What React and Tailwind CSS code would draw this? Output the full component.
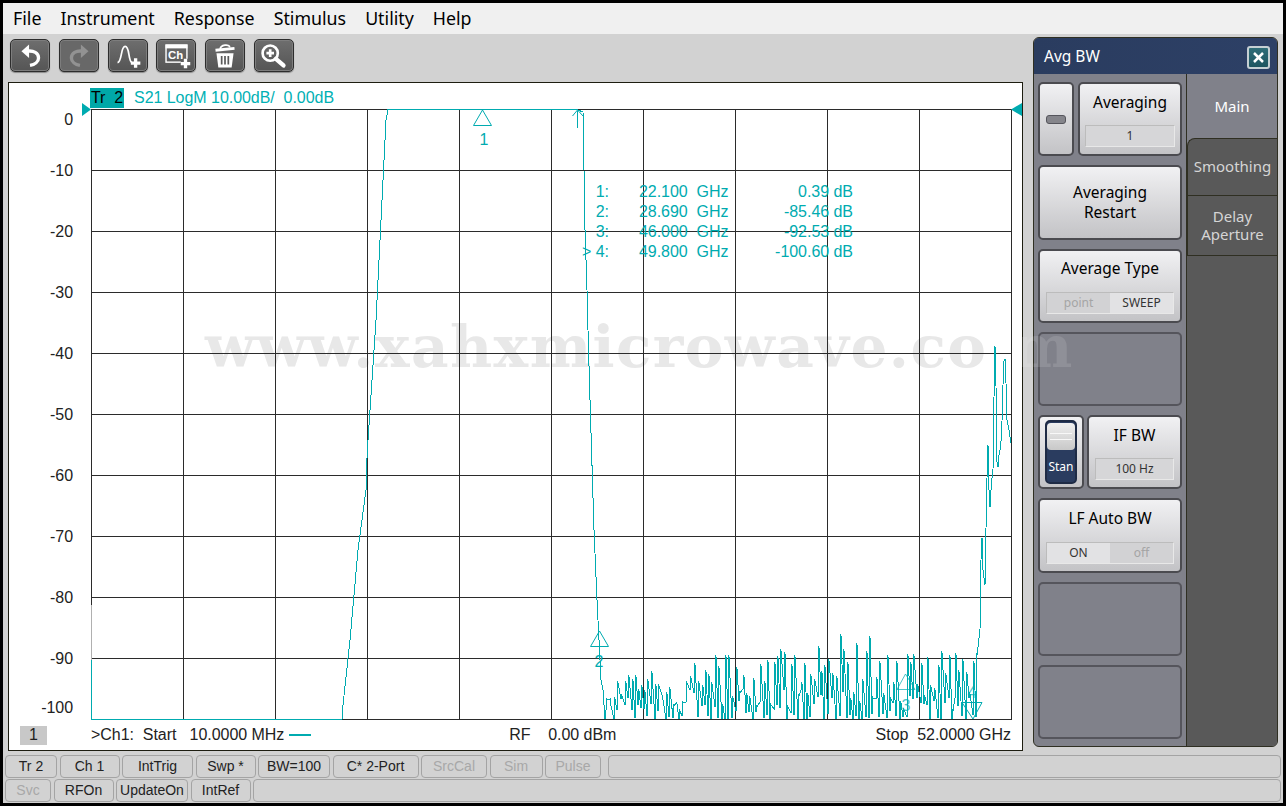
const TEAL = '#00abb0'

const menus = ['File', 'Instrument', 'Response', 'Stimulus', 'Utility', 'Help']

const row1 = [
  ['Tr 2', 52], ['Ch 1', 60], ['IntTrig', 71], ['Swp *', 60], ['BW=100', 72], ['C* 2-Port', 86],
  ['SrcCal', 66, true], ['Sim', 53, true], ['Pulse', 56, true],
]
const row2 = [['Svc', 46, true], ['RFOn', 60], ['UpdateOn', 72], ['IntRef', 60]]

const yLabels = [
  ['0', 119], ['-10', 170], ['-20', 231], ['-30', 292], ['-40', 353], ['-50', 414],
  ['-60', 475], ['-70', 536], ['-80', 597], ['-90', 658], ['-100', 707],
]

const readouts = [
  ['1:', '22.100  GHz', '0.39 dB', 191],
  ['2:', '28.690  GHz', '-85.46 dB', 211],
  ['3:', '46.000  GHz', '-92.53 dB', 231],
  ['> 4:', '49.800  GHz', '-100.60 dB', 251],
]

// noise floor tops, read off the picture
const envelope = [
  [605, 700], [618, 668], [640, 665], [665, 672], [690, 665], [715, 654], [728, 653], [745, 668],
  [775, 645], [790, 654], [810, 650], [828, 632], [838, 630], [858, 635], [866, 626], [880, 655],
  [890, 650], [918, 655], [926, 648], [945, 650], [965, 650], [978, 640],
]

const rightRise = [
  [980, 630], [981, 560], [982, 538], [983, 570], [984, 578], [985, 585], [986, 528], [987, 478], [988, 445],
  [989, 490], [990, 507], [991, 490], [992, 478], [993, 470], [994, 397], [995, 346], [996, 386], [997, 462],
  [998, 467], [999, 455], [1000, 450], [1001, 441], [1002, 421], [1003, 385], [1004, 361], [1005, 359],
  [1006, 383], [1007, 420], [1008, 425], [1009, 430], [1010, 437], [1011, 443],
]

function envelopeAt(x) {
  for (let i = 1; i < envelope.length; i++) {
    const [x0, y0] = envelope[i - 1]
    const [x1, y1] = envelope[i]
    if (x <= x1) return y0 + ((y1 - y0) * (x - x0)) / (x1 - x0)
  }
  return 640
}

function tracePoints() {
  const pts = [[91, 660], [91, 719], [342, 719], [343, 705], [350, 640], [358, 550], [366, 490], [367, 458], [368, 440],
    [372, 380], [376, 320], [380, 240], [384, 160], [386, 120], [388, 109.5], [576, 109.5], [578, 110], [583, 112],
    [584, 170], [585, 230], [587, 290], [588, 330], [590, 400], [594, 530], [597, 600], [599, 640], [601, 680], [603, 690], [604, 705], [605, 719]]
  let seed = 4711
  const rand = () => {
    seed = (seed * 16807) % 2147483647
    return seed / 2147483647
  }
  let x = 606
  while (x < 979) {
    const top = envelopeAt(x)
    const high = top + (719 - top) * Math.pow(rand(), 1.3) * 0.85
    const low = 719 - Math.pow(rand(), 3) * 30
    pts.push([x, Math.round(low)], [x, Math.round(high)], [x + 1, Math.round(high + 2)])
    x += 3 + Math.floor(rand() * 2)
  }
  return pts.concat(rightRise).map(p => p.join(',')).join(' ')
}

function ToolButton({ children, disabled }) {
  return (
    <button className={`flex h-[33px] w-[40px] items-center justify-center rounded-[5px] border border-[#2d2d2d] shadow-[inset_0_0_0_1px_#7d7d7d,0_1px_1px_#8a8a8a] ${disabled ? 'bg-[#686868]' : 'bg-gradient-to-b from-[#6e6e6e] to-[#555555]'}`}>
      <svg width="40" height="33" viewBox="0 0 40 33">{children}</svg>
    </button>
  )
}

function Toolbar() {
  return (
    <div className="flex h-[48px] gap-[8.8px] pl-[7px] pt-[5px]">
      <ToolButton>
        <path d="M11 12 L19 5 V19 Z" fill="#fff" />
        <path d="M17 12 C24 11 29 14 29 19 C29 23 25 26 20 27" fill="none" stroke="#fff" strokeWidth="3.5" />
      </ToolButton>
      <ToolButton disabled>
        <path d="M30 12 L22 5 V19 Z" fill="#929292" />
        <path d="M24 12 C17 11 12 14 12 19 C12 23 16 26 21 27" fill="none" stroke="#929292" strokeWidth="3.5" />
      </ToolButton>
      <ToolButton>
        <path d="M9 24 C14 23 12 7 17 7 C22 7 20 22 24 24" fill="none" stroke="#fff" strokeWidth="1.8" />
        <path d="M23 24.5 H33 M28 19.5 V29.5" stroke="#fff" strokeWidth="3.5" />
      </ToolButton>
      <ToolButton>
        <rect x="9.5" y="5.5" width="22" height="18" fill="none" stroke="#fff" strokeWidth="1.5" />
        <rect x="9" y="5" width="23" height="4" fill="#fff" />
        <text x="11.5" y="20.5" fontSize="12" fontWeight="700" fill="#fff" fontFamily="'Liberation Sans', sans-serif">Ch</text>
        <path d="M25 25 H35 M30 20 V30" stroke="#5f5f5f" strokeWidth="6" />
        <path d="M25 25 H35 M30 20 V30" stroke="#fff" strokeWidth="3.5" />
      </ToolButton>
      <ToolButton>
        <path d="M10 11 L30 9" stroke="#fff" strokeWidth="3" />
        <path d="M15 10 C15 5 25 4 25 8" fill="none" stroke="#fff" strokeWidth="1.8" />
        <path d="M11 14 H29 L27 29 H13 Z" fill="#fff" />
        <path d="M16.5 17 V26 M20 17 V26 M23.5 17 V26" stroke="#5a5a5a" strokeWidth="1.8" />
      </ToolButton>
      <ToolButton>
        <circle cx="16" cy="14" r="8" fill="none" stroke="#fff" strokeWidth="2.8" />
        <path d="M12 14 H20 M16 10 V18" stroke="#fff" strokeWidth="2.8" />
        <path d="M22 20 L30 27" stroke="#fff" strokeWidth="4.5" strokeLinecap="round" />
      </ToolButton>
    </div>
  )
}

function Plot() {
  const xs = [91, 183, 275, 367, 459, 551, 643, 735, 827, 919, 1011]
  const ys = [109, 170, 231, 292, 353, 414, 475, 536, 597, 658, 719]
  return (
    <svg width="1012" height="613" viewBox="9 108 1012 613" className="relative z-10 block overflow-visible" fontFamily="'Liberation Sans', Arial, sans-serif" fontSize="16">
      <g stroke="#2b2b2b" strokeWidth="1" shapeRendering="crispEdges">
        {xs.map(x => <line key={x} x1={x + 0.5} x2={x + 0.5} y1="109" y2="720" />)}
        {ys.map(y => <line key={y} x1="91" x2="1012" y1={y + 0.5} y2={y + 0.5} />)}
      </g>
      <line x1="91.5" x2="91.5" y1="605" y2="660" stroke="#b0b0b0" shapeRendering="crispEdges" />
      {yLabels.map(([t, y]) => (
        <text key={t} x="73" y={y + 6} textAnchor="end" fill="#222">{t}</text>
      ))}
      <polyline points={tracePoints()} fill="none" stroke={TEAL} strokeWidth="1" shapeRendering="crispEdges" />
      <path d="M82 103 L91 109.5 L82 116 Z M1022 103 L1011 109.5 L1022 116 Z" fill={TEAL} />

      <g fill="none" stroke={TEAL} strokeWidth="1">
        <path d="M482.5 110 L473.5 125.5 H491.5 Z" />
        <path d="M577.5 128 V111 M572.5 116 L577.5 110 L583 116" />
        <path d="M599.5 631 L590.5 646.5 H608.5 Z" />
        <path d="M905.5 674 L897 689.5 H915 Z" opacity="0.7" />
        <path d="M962 702.5 H982 L973 719 Z" />
      </g>
      <g fill={TEAL} textAnchor="middle">
        <text x="484" y="145">1</text>
        <text x="599" y="667">2</text>
        <text x="906" y="711" opacity="0.7">3</text>
        <text x="972" y="698" opacity="0.7">4</text>
      </g>
      {readouts.map(([n, f, v, y]) => (
        <g key={n} fill={TEAL}>
          <text x="609" y={y + 6} textAnchor="end">{n}</text>
          <text x="639" y={y + 6} xmlSpace="preserve">{f}</text>
          <text x="853" y={y + 6} textAnchor="end">{v}</text>
        </g>
      ))}
    </svg>
  )
}

function Chart() {
  return (
    <div className="relative ml-[5px] flex h-[669px] w-[1015px] flex-col border border-[#1d1d10] bg-white font-['Liberation_Sans',Arial,sans-serif] text-[16px] tracking-[-0.04px]">
      <div className="pointer-events-none absolute top-[229px] left-[196px] font-['DejaVu_Serif',serif] text-[58px] leading-[70px] font-bold tracking-[1.45px] whitespace-nowrap text-[#e8e8e8]">
        www.xahxmicrowave.co
      </div>
      <div className="relative z-10 flex h-[25px] items-end pl-[81px]">
        <span className="flex h-[20px] w-[34px] items-center justify-center bg-[#00a8a8] text-black whitespace-pre">Tr  2</span>
        <span className="ml-[10px] h-[20px] whitespace-pre leading-[20px] text-[#00b0b4]">S21 LogM 10.00dB/  0.00dB</span>
      </div>
      <Plot />
      <div className="relative z-10 flex h-[28px] items-center pr-[11px] pl-[11px] text-[#222]">
        <span className="flex h-[19px] w-[27px] items-center justify-center bg-[#c8c8c8]">1</span>
        <span className="ml-[44px] whitespace-pre">{'>Ch1:  Start   10.0000 MHz'}</span>
        <span className="ml-[5px] h-[2px] w-[22px] bg-[#00abb0]" />
        <span className="ml-[198px] whitespace-pre">{'RF    0.00 dBm'}</span>
        <span className="ml-auto whitespace-pre">Stop  52.0000 GHz</span>
      </div>
    </div>
  )
}

const lightBtn = 'rounded-[5px] border-2 border-[#4b4b50] bg-gradient-to-b from-[#f1f1f3] to-[#c3c3c6] text-black'

function ValueBox({ children }) {
  return (
    <div className="flex h-[22px] items-center justify-center border border-[#bcbcbc] border-b-[#e8e8e8] border-r-[#e8e8e8] bg-[#d6d6d8] text-[12px] text-[#333]">
      {children}
    </div>
  )
}

function Toggle({ left, right, leftOn }) {
  return (
    <div className="mx-[6px] mb-[7px] flex h-[22px] border border-[#bcbcbc] border-b-[#e8e8e8] border-r-[#e8e8e8] text-[12px]">
      <span className={`flex flex-1 items-center justify-center ${leftOn ? 'bg-[#e2e2e4] text-[#333]' : 'bg-[#d2d2d4] text-[#a5a5a5]'}`}>{left}</span>
      <span className={`flex flex-1 items-center justify-center ${leftOn ? 'bg-[#d2d2d4] text-[#a5a5a5]' : 'bg-[#e2e2e4] text-[#333]'}`}>{right}</span>
    </div>
  )
}

function EmptySlot() {
  return <div className="rounded-[5px] border-2 border-[#55555c] bg-[#80818a]" />
}

function SidePanel() {
  return (
    <div className="flex h-[710px] w-[245px] flex-col overflow-hidden rounded-[6px] border border-[#2f2f22] bg-[#80818a] font-['Noto_Sans',Tahoma,sans-serif]">
      <div className="flex h-[36px] shrink-0 items-center justify-between bg-gradient-to-r from-[#2a3c5f] to-[#2d4066] pt-[2px] pr-[7px] pl-[10px] text-[15.5px] text-white">
        <span>Avg BW</span>
        <span className="flex h-[23px] w-[23px] items-center justify-center rounded-[3px] border-2 border-[#c5cfd3] bg-gradient-to-b from-[#2f6d78] to-[#1e5560]">
          <svg width="13" height="13" viewBox="0 0 13 13"><path d="M2 2 L11 11 M11 2 L2 11" stroke="#fff" strokeWidth="2.5" /></svg>
        </span>
      </div>
      <div className="flex flex-1">
        <div className="flex w-[153px] shrink-0 flex-col border-r border-[#2f2f22] pt-[8px] pl-[4px]">
          <div className="grid h-[657px] w-[144px] grid-rows-8 gap-[9px]">
            <div className="flex gap-[4px]">
              <div className={`flex w-[36px] items-center justify-center ${lightBtn}`}>
                <span className="h-[9px] w-[20px] rounded-[3px] border border-[#55555c] bg-[#85858b]" />
              </div>
              <div className={`flex flex-1 flex-col justify-between px-[5px] pt-[6px] pb-[7px] text-center text-[15.5px] leading-[24px] ${lightBtn}`}>
                <span>Averaging</span>
                <ValueBox>1</ValueBox>
              </div>
            </div>
            <div className={`flex items-center justify-center text-center text-[15.5px] leading-[20px] ${lightBtn}`}>
              <span>Averaging<br />Restart</span>
            </div>
            <div className={`flex flex-col justify-between pt-[4px] text-center text-[15.5px] leading-[26px] ${lightBtn}`}>
              <span>Average Type</span>
              <Toggle left="point" right="SWEEP" />
            </div>
            <EmptySlot />
            <div className="flex gap-[3px]">
              <div className={`flex w-[46px] items-center justify-center ${lightBtn}`}>
                <div className="flex h-[64px] w-[32px] flex-col items-center rounded-[5px] border-2 border-[#1e2b45] bg-[#2a3c5f] text-[12px] text-white">
                  <span className="mt-[1px] flex h-[27px] w-[28px] flex-col justify-center gap-[5px] rounded-[4px] bg-gradient-to-b from-[#f0f0f0] to-[#c8c8c8] px-[3px]">
                    <span className="h-[1px] bg-[#f8f8f8]" />
                    <span className="h-[1px] bg-[#f8f8f8]" />
                  </span>
                  <span className="mt-[9px] leading-[16px]">Stan</span>
                </div>
              </div>
              <div className={`flex flex-1 flex-col justify-between px-[6px] pt-[5px] pb-[7px] text-center text-[15.5px] leading-[26px] ${lightBtn}`}>
                <span>IF BW</span>
                <ValueBox>100 Hz</ValueBox>
              </div>
            </div>
            <div className={`flex flex-col justify-between pt-[5px] text-center text-[15.5px] leading-[26px] ${lightBtn}`}>
              <span>LF Auto BW</span>
              <Toggle left="ON" right="off" leftOn />
            </div>
            <EmptySlot />
            <EmptySlot />
          </div>
        </div>
        <div className="flex flex-1 flex-col text-center text-[15px]">
          <div className="flex h-[64px] shrink-0 items-center justify-center text-white">Main</div>
          <div className="flex h-[57px] shrink-0 items-center justify-center rounded-tl-[8px] border-t border-l border-[#2f2f22] bg-[#595959] pb-[2px] text-[#d5d5d5]">Smoothing</div>
          <div className="flex h-[61px] shrink-0 items-center justify-center border-y border-l border-[#2f2f22] bg-[#595959] pb-[1px] leading-[18px] text-[#d5d5d5]">
            <span>Delay<br />Aperture</span>
          </div>
          <div className="flex-1 bg-[#595959]" />
        </div>
      </div>
    </div>
  )
}

function StatusCell({ label, width, disabled }) {
  return (
    <div
      style={{ width }}
      className={`flex shrink-0 items-center justify-center rounded-[4px] border border-[#a4a4a4] whitespace-pre ${disabled ? 'text-[#a8a8a8]' : 'text-[#222]'}`}
    >
      {label}
    </div>
  )
}

function StatusRow({ cells, fillClass }) {
  return (
    <div className="flex h-[23px] gap-[2.5px]">
      {cells.map(([label, width, disabled]) => (
        <StatusCell key={label} label={label} width={width} disabled={disabled} />
      ))}
      <div className={`flex-1 rounded-[4px] border border-[#a4a4a4] ${fillClass}`} />
    </div>
  )
}

export default function App() {
  return (
    <div className="relative h-[806px] w-[1286px] overflow-hidden border-[3px] border-black bg-[#d2d2d2]">
      <div className="flex h-[31px] items-center gap-[19px] bg-[#f0f0f0] pl-[10px] font-['Noto_Sans',Tahoma,sans-serif] text-[17.8px] text-black">
        {menus.map(m => <span key={m}>{m}</span>)}
      </div>
      <div className="flex h-[719px]">
        <div className="w-[1020px] shrink-0">
          <Toolbar />
          <Chart />
        </div>
        <div className="ml-[10px] pt-[3px]">
          <SidePanel />
        </div>
      </div>
      <div className="flex flex-col gap-[1px] px-[2px] pt-[2px] font-['Liberation_Sans',Arial,sans-serif] text-[14px]">
        <StatusRow cells={row1} fillClass="ml-[4.5px]" />
        <StatusRow cells={row2} fillClass="" />
      </div>
      {/* tail of the watermark runs over the side panel and gets lighter there */}
      <div className="pointer-events-none absolute top-[309px] left-[1008px] font-['DejaVu_Serif',serif] text-[58px] leading-[70px] font-bold whitespace-nowrap text-[#ffffff1f]">
        m
      </div>
    </div>
  )
}
